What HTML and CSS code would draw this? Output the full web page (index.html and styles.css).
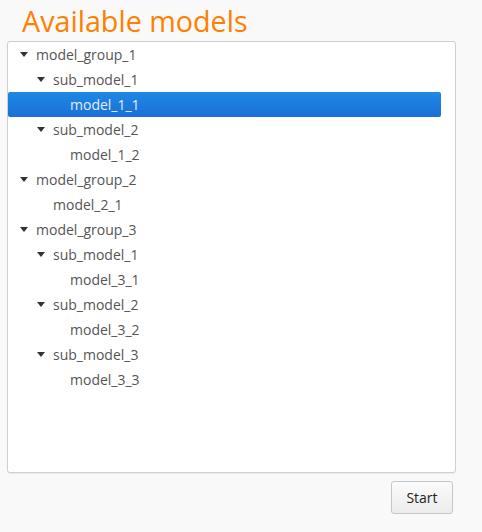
FILE: index.html
```html
<!DOCTYPE html>
<html>
<head>
<meta charset="utf-8">
<link rel="stylesheet" href="styles.css">
</head>
<body>
<div class="page">
  <h1 class="title">Available models</h1>
  <div class="panel">
    <ul class="tree">
      <li class="row lvl0"><span class="caret"></span><span class="label">model_group_1</span></li>
      <li class="row lvl1"><span class="caret"></span><span class="label">sub_model_1</span></li>
      <li class="row lvl2 selected"><span class="nocaret"></span><span class="label">model_1_1</span></li>
      <li class="row lvl1"><span class="caret"></span><span class="label">sub_model_2</span></li>
      <li class="row lvl2"><span class="nocaret"></span><span class="label">model_1_2</span></li>
      <li class="row lvl0"><span class="caret"></span><span class="label">model_group_2</span></li>
      <li class="row lvl1"><span class="nocaret"></span><span class="label">model_2_1</span></li>
      <li class="row lvl0"><span class="caret"></span><span class="label">model_group_3</span></li>
      <li class="row lvl1"><span class="caret"></span><span class="label">sub_model_1</span></li>
      <li class="row lvl2"><span class="nocaret"></span><span class="label">model_3_1</span></li>
      <li class="row lvl1"><span class="caret"></span><span class="label">sub_model_2</span></li>
      <li class="row lvl2"><span class="nocaret"></span><span class="label">model_3_2</span></li>
      <li class="row lvl1"><span class="caret"></span><span class="label">sub_model_3</span></li>
      <li class="row lvl2"><span class="nocaret"></span><span class="label">model_3_3</span></li>
    </ul>
  </div>
  <div class="actions">
    <button class="btn">Start</button>
  </div>
</div>
</body>
</html>
```
FILE: styles.css
```css
html, body {
  margin: 0;
  padding: 0;
  background: #f9f9f9;
  font-family: "Open Sans", "DejaVu Sans", sans-serif;
}
.page {
  width: 482px;
  height: 532px;
  box-sizing: border-box;
  padding: 0 26px 0 7px;
  display: flex;
  flex-direction: column;
}
.title {
  margin: 0;
  padding: 2px 0 0 15px;
  height: 41px;
  box-sizing: border-box;
  font-size: 28.7px;
  font-weight: 400;
  line-height: 38px;
  color: #ff8000;
}
.panel {
  height: 432px;
  box-sizing: border-box;
  background: #fff;
  border: 1px solid #cfcfcf;
  border-radius: 3px;
  box-shadow: 0 1px 1px rgba(0,0,0,0.06);
}
.tree {
  list-style: none;
  margin: 0;
  padding: 0 14px 0 0;
}
.row {
  height: 25px;
  display: flex;
  align-items: center;
  font-size: 14px;
  color: #555;
  border-radius: 2px;
}
.lvl0 { padding-left: 11px; }
.lvl1 { padding-left: 28px; }
.lvl2 { padding-left: 45px; }
.caret, .nocaret {
  width: 17px;
  height: 25px;
  flex: none;
  position: relative;
}
.caret::before {
  content: "";
  position: absolute;
  left: 1px;
  top: 10px;
  border-left: 4px solid transparent;
  border-right: 4px solid transparent;
  border-top: 5px solid #333;
}
.label {
  line-height: 25px;
}
.selected {
  background: linear-gradient(#1e88e5, #1a70d8);
  color: #e4ecf5;
}
.actions {
  display: flex;
  justify-content: flex-end;
  padding-top: 8px;
}
.btn {
  width: 62px;
  height: 33px;
  margin-right: 3px;
  box-sizing: border-box;
  border: 1px solid #c6c6c6;
  border-radius: 3px;
  background: linear-gradient(#fbfbfb, #ececec);
  font-family: "Open Sans", "DejaVu Sans", sans-serif;
  font-size: 14px;
  color: #222;
  padding: 0;
}
```
